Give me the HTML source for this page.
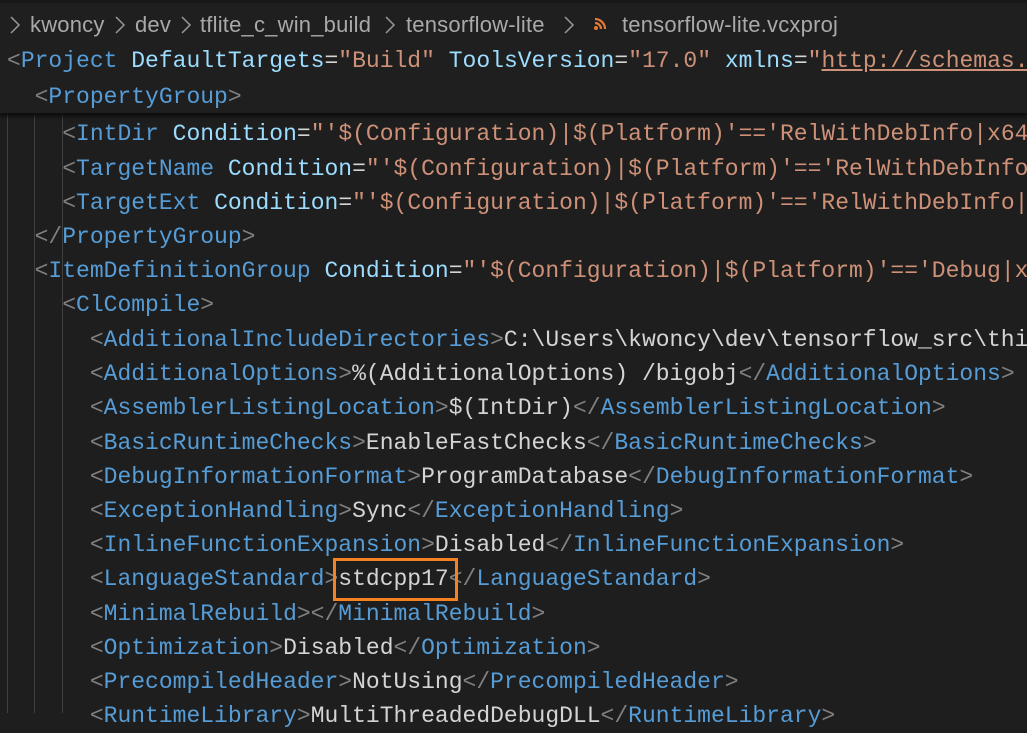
<!DOCTYPE html>
<html><head><meta charset="utf-8"><style>
body{margin:0;width:1027px;height:710px;overflow:hidden;background:#1e1e1e;position:relative;}
.top{position:absolute;left:0;top:0;width:1027px;height:3px;background:#181818;z-index:5}
.bc{position:absolute;top:8px;height:34px;line-height:34px;font-family:"Liberation Sans",sans-serif;font-size:22px;letter-spacing:0.2px;color:#a9a9a9;white-space:pre;z-index:3}
.ch{position:absolute;top:13px;z-index:4}
.sticky{position:absolute;left:0;top:3px;width:1027px;height:110px;background:#1f1f1f;box-shadow:0 3px 4px #0a0a0a;z-index:2}
.l{position:absolute;left:7px;height:34px;line-height:34px;font-family:"Liberation Mono",monospace;font-size:23px;white-space:pre;color:#d4d4d4;width:1020px;overflow:hidden;z-index:3}
.b{color:#808080}.t{color:#569cd6}.a{color:#9cdcfe}.s{color:#ce9178}
.g{position:absolute;top:113px;height:600px;width:1px;background:#404040}
.box{position:absolute;left:333px;top:558px;width:119px;height:37px;border:3px solid #f58220;z-index:4}
</style></head><body>
<div class="top"></div>
<div class="g" style="left:7px"></div><div class="g" style="left:34px"></div><div class="g" style="left:62px"></div>
<div class="sticky"></div>
<div class="bc" style="left:30px">kwoncy</div>
<div class="bc" style="left:135px">dev</div>
<div class="bc" style="left:200px">tflite_c_win_build</div>
<div class="bc" style="left:406px">tensorflow-lite</div>
<div class="bc" style="left:622px">tensorflow-lite.vcxproj</div>
<svg class="ch" style="left:9px" width="12" height="24" viewBox="0 0 12 24"><path d="M2 4l8 8-8 8" stroke="#999" stroke-width="1.5" fill="none"/></svg>
<svg class="ch" style="left:114px" width="12" height="24" viewBox="0 0 12 24"><path d="M2 4l8 8-8 8" stroke="#999" stroke-width="1.5" fill="none"/></svg>
<svg class="ch" style="left:180px" width="12" height="24" viewBox="0 0 12 24"><path d="M2 4l8 8-8 8" stroke="#999" stroke-width="1.5" fill="none"/></svg>
<svg class="ch" style="left:384px" width="12" height="24" viewBox="0 0 12 24"><path d="M2 4l8 8-8 8" stroke="#999" stroke-width="1.5" fill="none"/></svg>
<svg class="ch" style="left:563px" width="12" height="24" viewBox="0 0 12 24"><path d="M2 4l8 8-8 8" stroke="#999" stroke-width="1.5" fill="none"/></svg>
<svg style="position:absolute;left:593px;top:17px;z-index:4" width="14" height="14" viewBox="0 0 14 14"><circle cx="3" cy="11" r="2" fill="#e37933"/><path d="M2 6a6 6 0 0 1 6 6M2 2a10 10 0 0 1 10 10" stroke="#e37933" stroke-width="2.2" fill="none"/></svg>

<div class="l" style="top:44px"><span class="b">&lt;</span><span class="t">Project</span> <span class="a">DefaultTargets</span>=<span class="s">"Build"</span> <span class="a">ToolsVersion</span>=<span class="s">"17.0"</span> <span class="a">xmlns</span>=<span class="s">"<u>http://schemas.microsoft.com</u></span></div>
<div class="l" style="top:80px">  <span class="b">&lt;</span><span class="t">PropertyGroup</span><span class="b">&gt;</span></div>
<div class="l" style="top:117px">    <span class="b">&lt;</span><span class="t">IntDir</span> <span class="a">Condition</span>=<span class="s">"'$(Configuration)|$(Platform)'=='RelWithDebInfo|x64'"</span></div>
<div class="l" style="top:152px">    <span class="b">&lt;</span><span class="t">TargetName</span> <span class="a">Condition</span>=<span class="s">"'$(Configuration)|$(Platform)'=='RelWithDebInfo|x64'"</span></div>
<div class="l" style="top:186px">    <span class="b">&lt;</span><span class="t">TargetExt</span> <span class="a">Condition</span>=<span class="s">"'$(Configuration)|$(Platform)'=='RelWithDebInfo|x64'"</span></div>
<div class="l" style="top:220px">  <span class="b">&lt;/</span><span class="t">PropertyGroup</span><span class="b">&gt;</span></div>
<div class="l" style="top:254px">  <span class="b">&lt;</span><span class="t">ItemDefinitionGroup</span> <span class="a">Condition</span>=<span class="s">"'$(Configuration)|$(Platform)'=='Debug|x64'"</span></div>
<div class="l" style="top:288px">    <span class="b">&lt;</span><span class="t">ClCompile</span><span class="b">&gt;</span></div>
<div class="l" style="top:323px">      <span class="b">&lt;</span><span class="t">AdditionalIncludeDirectories</span><span class="b">&gt;</span>C:\Users\kwoncy\dev\tensorflow_src\third_party</div>
<div class="l" style="top:357px">      <span class="b">&lt;</span><span class="t">AdditionalOptions</span><span class="b">&gt;</span>%(AdditionalOptions) /bigobj<span class="b">&lt;/</span><span class="t">AdditionalOptions</span><span class="b">&gt;</span></div>
<div class="l" style="top:391px">      <span class="b">&lt;</span><span class="t">AssemblerListingLocation</span><span class="b">&gt;</span>$(IntDir)<span class="b">&lt;/</span><span class="t">AssemblerListingLocation</span><span class="b">&gt;</span></div>
<div class="l" style="top:426px">      <span class="b">&lt;</span><span class="t">BasicRuntimeChecks</span><span class="b">&gt;</span>EnableFastChecks<span class="b">&lt;/</span><span class="t">BasicRuntimeChecks</span><span class="b">&gt;</span></div>
<div class="l" style="top:460px">      <span class="b">&lt;</span><span class="t">DebugInformationFormat</span><span class="b">&gt;</span>ProgramDatabase<span class="b">&lt;/</span><span class="t">DebugInformationFormat</span><span class="b">&gt;</span></div>
<div class="l" style="top:494px">      <span class="b">&lt;</span><span class="t">ExceptionHandling</span><span class="b">&gt;</span>Sync<span class="b">&lt;/</span><span class="t">ExceptionHandling</span><span class="b">&gt;</span></div>
<div class="l" style="top:528px">      <span class="b">&lt;</span><span class="t">InlineFunctionExpansion</span><span class="b">&gt;</span>Disabled<span class="b">&lt;/</span><span class="t">InlineFunctionExpansion</span><span class="b">&gt;</span></div>
<div class="l" style="top:562px">      <span class="b">&lt;</span><span class="t">LanguageStandard</span><span class="b">&gt;</span>stdcpp17<span class="b">&lt;/</span><span class="t">LanguageStandard</span><span class="b">&gt;</span></div>
<div class="l" style="top:597px">      <span class="b">&lt;</span><span class="t">MinimalRebuild</span><span class="b">&gt;&lt;/</span><span class="t">MinimalRebuild</span><span class="b">&gt;</span></div>
<div class="l" style="top:631px">      <span class="b">&lt;</span><span class="t">Optimization</span><span class="b">&gt;</span>Disabled<span class="b">&lt;/</span><span class="t">Optimization</span><span class="b">&gt;</span></div>
<div class="l" style="top:665px">      <span class="b">&lt;</span><span class="t">PrecompiledHeader</span><span class="b">&gt;</span>NotUsing<span class="b">&lt;/</span><span class="t">PrecompiledHeader</span><span class="b">&gt;</span></div>
<div class="l" style="top:699px">      <span class="b">&lt;</span><span class="t">RuntimeLibrary</span><span class="b">&gt;</span>MultiThreadedDebugDLL<span class="b">&lt;/</span><span class="t">RuntimeLibrary</span><span class="b">&gt;</span></div>
<div class="box"></div>
</body></html>
